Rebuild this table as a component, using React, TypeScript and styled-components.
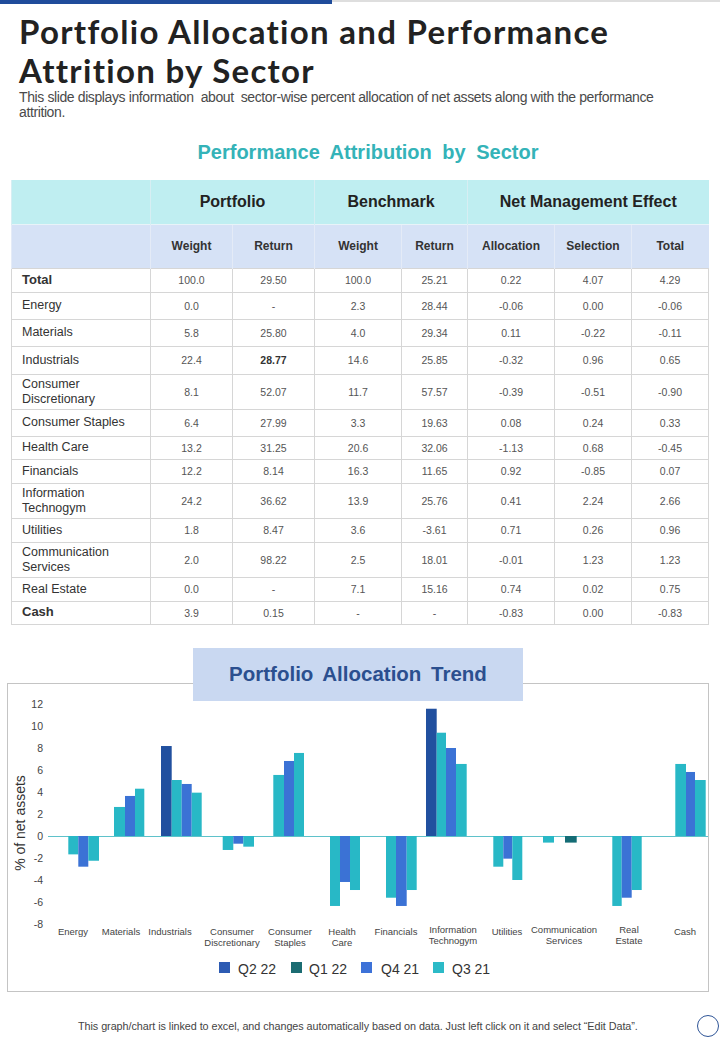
import React from "react";
import styled, { createGlobalStyle } from "styled-components";

const GlobalStyle = createGlobalStyle`
  html, body { margin: 0; padding: 0; background: #ffffff; }
  body { font-family: "Liberation Sans", Arial, sans-serif; color: #333; }
  * { box-sizing: border-box; }
`;

const Page = styled.div`
  position: relative;
  width: 720px;
  height: 1040px;
  overflow: hidden;
  background: #fff;
  display: flex;
  flex-direction: column;
`;

const TopRule = styled.div`
  display: flex;
  height: 4px;
`;
const RuleAccent = styled.div`
  width: 332px;
  height: 4px;
  background: #1f4c9b;
`;
const RuleLine = styled.div`
  flex: 1;
  height: 2px;
  background: #dedede;
`;

const Header = styled.header`
  padding: 8px 0 0 19px;
`;
const Title = styled.h1`
  margin: 0;
  font-family: Lato, "Open Sans", sans-serif;
  font-weight: 700;
  font-size: 33px;
  line-height: 39px;
  letter-spacing: 1.3px;
  color: #222;
`;
const Subtitle = styled.p`
  margin: 0;
  width: 645px;
  font-size: 14px;
  line-height: 15px;
  color: #4a4a4a;
  white-space: pre-wrap;
  letter-spacing: -0.39px;
`;

const SectionHeading = styled.h2`
  margin: 20px 0 0 0;
  padding-left: 16px;
  height: 24px;
  text-align: center;
  font-size: 20px;
  line-height: 24px;
  font-weight: 700;
  color: #34b3b8;
  word-spacing: 5px;
`;

const Table = styled.table`
  margin: 16px 0 0 11px;
  width: 697px;
  border-collapse: collapse;
  table-layout: fixed;
`;

const GroupCell = styled.th`
  height: 44px;
  padding: 0;
  background: #bfeef1;
  font-size: 16px;
  font-weight: 700;
  color: #222;
  text-align: center;
  vertical-align: middle;
  border-left: 1px solid #d7eef3;
`;

const SubCell = styled.th`
  height: 44px;
  padding: 0;
  background: #d6e2f6;
  font-size: 12px;
  font-weight: 700;
  color: #333;
  text-align: center;
  vertical-align: middle;
  border-left: 1px solid #e4ebf7;
  border-top: 1px solid #e8f3f8;
`;

const Row = styled.tr<{ $h: number }>`
  height: ${(p) => p.$h}px;
`;

const LabelCell = styled.td<{ $strong?: boolean }>`
  padding: 0 0 0 10px;
  font-size: ${(p) => (p.$strong ? 13 : 12.5)}px;
  font-weight: ${(p) => (p.$strong ? 700 : 400)};
  color: #333;
  line-height: 14.5px;
  white-space: pre-line;
  text-align: left;
  vertical-align: middle;
  border: 1px solid #d6d6d6;
`;

const NumCell = styled.td<{ $bold?: boolean }>`
  padding: 0;
  text-align: center;
  vertical-align: middle;
  font-size: 10.5px;
  font-weight: ${(p) => (p.$bold ? 700 : 400)};
  color: ${(p) => (p.$bold ? "#333" : "#555")};
  border: 1px solid #d6d6d6;
`;

const ChartFrame = styled.section`
  position: relative;
  margin: 58px 0 0 7px;
  width: 702px;
  height: 309px;
  border: 1px solid #c4c4c4;
`;

const ChartTitle = styled.div`
  position: absolute;
  left: 185px;
  top: -36px;
  width: 330px;
  height: 53px;
  background: #c9d8f1;
  display: flex;
  align-items: center;
  justify-content: center;
  font-size: 20.5px;
  font-weight: 700;
  color: #2b4f8f;
  word-spacing: 4px;
`;

const ChartSvg = styled.svg`
  display: block;
  width: 700px;
  height: 307px;
`;

const Footer = styled.footer`
  display: flex;
  align-items: center;
  height: 24px;
  margin-top: 22px;
`;

const FooterNote = styled.p`
  margin: 0 0 0 78px;
  font-size: 10.8px;
  color: #444;
  letter-spacing: -0.05px;
`;

const CornerMark = styled.div`
  margin-left: auto;
  margin-right: 1px;
  width: 22px;
  height: 22px;
  border-radius: 50%;
  border: 1.5px solid #2f5597;
`;

type Data = {
  label: string;
  strong?: boolean;
  h: number;
  vals: string[];
  boldIdx?: number;
};

const rows: Data[] = [
  { label: "Total", strong: true, h: 24, vals: ["100.0", "29.50", "100.0", "25.21", "0.22", "4.07", "4.29"] },
  { label: "Energy", h: 27, vals: ["0.0", "-", "2.3", "28.44", "-0.06", "0.00", "-0.06"] },
  { label: "Materials", h: 27, vals: ["5.8", "25.80", "4.0", "29.34", "0.11", "-0.22", "-0.11"] },
  { label: "Industrials", h: 28, vals: ["22.4", "28.77", "14.6", "25.85", "-0.32", "0.96", "0.65"], boldIdx: 1 },
  { label: "Consumer\nDiscretionary", h: 35, vals: ["8.1", "52.07", "11.7", "57.57", "-0.39", "-0.51", "-0.90"] },
  { label: "Consumer Staples", h: 27, vals: ["6.4", "27.99", "3.3", "19.63", "0.08", "0.24", "0.33"] },
  { label: "Health Care", h: 23, vals: ["13.2", "31.25", "20.6", "32.06", "-1.13", "0.68", "-0.45"] },
  { label: "Financials", h: 24, vals: ["12.2", "8.14", "16.3", "11.65", "0.92", "-0.85", "0.07"] },
  { label: "Information\nTechnogym", h: 35, vals: ["24.2", "36.62", "13.9", "25.76", "0.41", "2.24", "2.66"] },
  { label: "Utilities", h: 24, vals: ["1.8", "8.47", "3.6", "-3.61", "0.71", "0.26", "0.96"] },
  { label: "Communication\nServices", h: 35, vals: ["2.0", "98.22", "2.5", "18.01", "-0.01", "1.23", "1.23"] },
  { label: "Real Estate", h: 24, vals: ["0.0", "-", "7.1", "15.16", "0.74", "0.02", "0.75"] },
  { label: "Cash", strong: true, h: 23, vals: ["3.9", "0.15", "-", "-", "-0.83", "0.00", "-0.83"] },
];

const colWidths = [139, 82, 82, 87, 66, 87, 77, 77];

type BarColor = "navy" | "blue" | "teal" | "dark";
const barColors: Record<BarColor, string> = {
  navy: "#21509f",
  blue: "#3b72d5",
  teal: "#28b8c6",
  dark: "#146c75",
};

const ZERO = 835;
const UNIT = 11;

const bars: [number, number, number, BarColor][] = [
  [68.3, 78.3, -1.67, "teal"],
  [78.3, 88.3, -2.79, "blue"],
  [88.3, 99, -2.25, "teal"],
  [114, 125, 2.64, "teal"],
  [125, 135, 3.64, "blue"],
  [135, 144.3, 4.3, "teal"],
  [161, 171.7, 8.18, "navy"],
  [171.7, 181.7, 5.09, "teal"],
  [181.7, 191.7, 4.73, "blue"],
  [191.7, 201.7, 3.94, "teal"],
  [222.7, 233.3, -1.27, "teal"],
  [233.3, 243.3, -0.7, "blue"],
  [243.3, 254, -0.97, "teal"],
  [273.3, 284, 5.55, "teal"],
  [284, 294, 6.82, "blue"],
  [294, 304, 7.55, "teal"],
  [330, 340, -6.36, "teal"],
  [340, 350, -4.18, "blue"],
  [350, 360, -4.91, "teal"],
  [386, 396, -5.61, "teal"],
  [396, 406.7, -6.36, "blue"],
  [406.7, 416.7, -4.91, "teal"],
  [426, 436.7, 11.57, "navy"],
  [436.7, 446, 9.39, "teal"],
  [446, 456, 8.0, "blue"],
  [456, 466.7, 6.55, "teal"],
  [493.3, 503.3, -2.79, "teal"],
  [503.3, 512.3, -2.06, "blue"],
  [512.3, 522.3, -4.0, "teal"],
  [543, 554, -0.6, "teal"],
  [565, 576.7, -0.6, "dark"],
  [612.3, 621.7, -6.36, "teal"],
  [621.7, 631.7, -5.61, "blue"],
  [631.7, 641.7, -4.91, "teal"],
  [675.3, 686, 6.55, "teal"],
  [686, 695, 5.82, "blue"],
  [695, 705.7, 5.09, "teal"],
];

const categories: { x: number; y: number; lines: string[] }[] = [
  { x: 73, y: 931, lines: ["Energy"] },
  { x: 121, y: 931, lines: ["Materials"] },
  { x: 170, y: 931, lines: ["Industrials"] },
  { x: 232, y: 931, lines: ["Consumer", "Discretionary"] },
  { x: 290, y: 931, lines: ["Consumer", "Staples"] },
  { x: 342, y: 931, lines: ["Health", "Care"] },
  { x: 396, y: 930.5, lines: ["Financials"] },
  { x: 453, y: 928.5, lines: ["Information", "Technogym"] },
  { x: 507, y: 930.5, lines: ["Utilities"] },
  { x: 564, y: 928.5, lines: ["Communication", "Services"] },
  { x: 629, y: 928.5, lines: ["Real", "Estate"] },
  { x: 685, y: 930.5, lines: ["Cash"] },
];

const ticks = [12, 10, 8, 6, 4, 2, 0, -2, -4, -6, -8];

const legend: { sq: number; tx: number; label: string; color: string }[] = [
  { sq: 219, tx: 238, label: "Q2 22", color: "#2d5bb3" },
  { sq: 291, tx: 309, label: "Q1 22", color: "#1b6c72" },
  { sq: 361, tx: 381, label: "Q4 21", color: "#3d72d8" },
  { sq: 433, tx: 452, label: "Q3 21", color: "#2cbac7" },
];

function TrendChart() {
  return (
    <ChartSvg viewBox="8 683 700 307">
      <line x1={48} x2={708} y1={ZERO + 0.5} y2={ZERO + 0.5} stroke="#5fc2ca" strokeWidth={1} />
      {bars.map(([x0, x1, v, c], i) => (
        <rect
          key={i}
          x={x0}
          width={x1 - x0}
          y={v > 0 ? ZERO - v * UNIT : ZERO}
          height={Math.abs(v) * UNIT}
          fill={barColors[c]}
        />
      ))}
      {ticks.map((t) => (
        <text
          key={t}
          x={43}
          y={ZERO - t * UNIT + 3.8}
          textAnchor="end"
          fontSize={10.5}
          fill="#444"
          fontFamily="Liberation Sans, Arial, sans-serif"
        >
          {t}
        </text>
      ))}
      <text
        transform="translate(25 822) rotate(-90)"
        textAnchor="middle"
        fontSize={14}
        fill="#333"
        fontFamily="Liberation Sans, Arial, sans-serif"
      >
        % of net assets
      </text>
      {categories.map((c) => (
        <text
          key={c.x}
          x={c.x}
          textAnchor="middle"
          fontSize={9.5}
          fill="#444"
          fontFamily="Liberation Sans, Arial, sans-serif"
        >
          {c.lines.map((l, i) => (
            <tspan key={i} x={c.x} y={c.y + 3.4 + i * 11}>
              {l}
            </tspan>
          ))}
        </text>
      ))}
      {legend.map((l) => (
        <g key={l.label}>
          <rect x={l.sq} y={961} width={11} height={11} fill={l.color} />
          <text x={l.tx} y={973} fontSize={14} fill="#333" fontFamily="Liberation Sans, Arial, sans-serif">
            {l.label}
          </text>
        </g>
      ))}
    </ChartSvg>
  );
}

export default function App() {
  return (
    <Page>
      <GlobalStyle />
      <TopRule>
        <RuleAccent />
        <RuleLine />
      </TopRule>
      <Header>
        <Title>
          Portfolio Allocation and Performance
          <br />
          Attrition by Sector
        </Title>
        <Subtitle>
          {"This slide displays information  about  sector-wise percent allocation of net assets along with the performance attrition."}
        </Subtitle>
      </Header>
      <SectionHeading>Performance Attribution by Sector</SectionHeading>
      <Table>
        <colgroup>
          {colWidths.map((w, i) => (
            <col key={i} style={{ width: w }} />
          ))}
        </colgroup>
        <thead>
          <tr>
            <GroupCell />
            <GroupCell colSpan={2}>Portfolio</GroupCell>
            <GroupCell colSpan={2}>Benchmark</GroupCell>
            <GroupCell colSpan={3}>Net Management Effect</GroupCell>
          </tr>
          <tr>
            <SubCell />
            <SubCell>Weight</SubCell>
            <SubCell>Return</SubCell>
            <SubCell>Weight</SubCell>
            <SubCell>Return</SubCell>
            <SubCell>Allocation</SubCell>
            <SubCell>Selection</SubCell>
            <SubCell>Total</SubCell>
          </tr>
        </thead>
        <tbody>
          {rows.map((r) => (
            <Row key={r.label} $h={r.h}>
              <LabelCell $strong={r.strong}>{r.label}</LabelCell>
              {r.vals.map((v, i) => (
                <NumCell key={i} $bold={r.boldIdx === i}>
                  {v}
                </NumCell>
              ))}
            </Row>
          ))}
        </tbody>
      </Table>
      <ChartFrame>
        <ChartTitle>Portfolio Allocation Trend</ChartTitle>
        <TrendChart />
      </ChartFrame>
      <Footer>
        <FooterNote>
          This graph/chart is linked to excel, and changes automatically based on data. Just left click on it and select “Edit Data”.
        </FooterNote>
        <CornerMark />
      </Footer>
    </Page>
  );
}
